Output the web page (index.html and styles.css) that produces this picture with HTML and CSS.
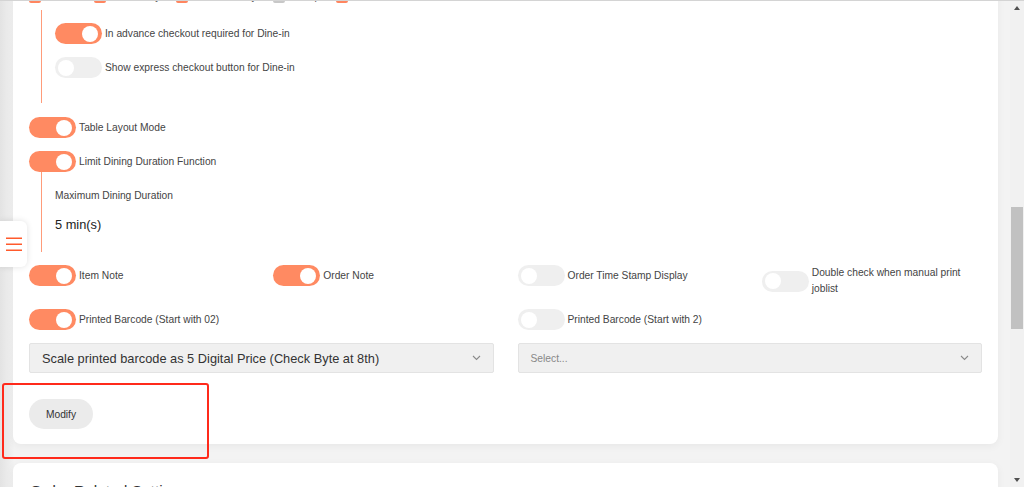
FILE: index.html
```html
<!DOCTYPE html>
<html lang="en">
<head>
  <meta charset="UTF-8">
  <title>Store Settings</title>
  <link rel="stylesheet" href="styles.css">
</head>
<body>
  <div class="viewport">
    <main class="page">

      <!-- Dine-in settings card (scrolled) -->
      <section class="card card-first">
        <div class="check-row">
          <label class="check on"><span class="box"></span>Dine-in</label>
          <label class="check on"><span class="box"></span>Take Away</label>
          <label class="check on"><span class="box"></span>Food Delivery</label>
          <label class="check"><span class="box"></span>Pickup</label>
          <label class="check on"><span class="box"></span>Kiosk</label>
        </div>

        <div class="sub-group">
          <div class="switch-row"><span class="switch on"></span><span>In advance checkout required for Dine-in</span></div>
          <div class="switch-row"><span class="switch"></span><span>Show express checkout button for Dine-in</span></div>
        </div>

        <div class="switch-row table-mode"><span class="switch on"></span><span>Table Layout Mode</span></div>
        <div class="switch-row limit-duration"><span class="switch on"></span><span>Limit Dining Duration Function</span></div>

        <div class="sub-group duration">
          <div class="field-label">Maximum Dining Duration</div>
          <div class="field-value">5 min(s)</div>
        </div>

        <div class="option-grid">
          <div class="switch-row"><span class="switch on"></span><span>Item Note</span></div>
          <div class="switch-row"><span class="switch on"></span><span>Order Note</span></div>
          <div class="switch-row"><span class="switch"></span><span>Order Time Stamp Display</span></div>
          <div class="switch-row"><span class="switch"></span><span>Double check when manual print joblist</span></div>
          <div class="switch-row"><span class="switch on"></span><span>Printed Barcode (Start with 02)</span></div>
          <div></div>
          <div class="switch-row"><span class="switch"></span><span>Printed Barcode (Start with 2)</span></div>
          <div></div>
        </div>

        <div class="select-row">
          <div class="select">
            <span>Scale printed barcode as 5 Digital Price (Check Byte at 8th)</span>
            <svg class="chevron" width="9" height="6" viewBox="0 0 9 6"><polyline points="1,1 4.5,4.5 8,1" fill="none" stroke="#8a8a8a" stroke-width="1.1"/></svg>
          </div>
          <div class="select placeholder">
            <span>Select...</span>
            <svg class="chevron" width="9" height="6" viewBox="0 0 9 6"><polyline points="1,1 4.5,4.5 8,1" fill="none" stroke="#8a8a8a" stroke-width="1.1"/></svg>
          </div>
        </div>

        <button class="btn-modify">Modify</button>
      </section>

      <section class="card card-next">
        <h2>Order Related Settings</h2>
      </section>

      <!-- floating side menu tab -->
      <button class="menu-tab" aria-label="Menu">
        <svg width="16" height="14" viewBox="0 0 16 14">
          <rect x="0" y="0.5" width="16" height="1.5" fill="#ff5a2c"/>
          <rect x="0" y="6.5" width="16" height="1.5" fill="#ff5a2c"/>
          <rect x="0" y="12.5" width="16" height="1.5" fill="#ff5a2c"/>
        </svg>
      </button>

      <!-- red highlight drawn over the screenshot -->
      <div class="annotation"></div>
    </main>

    <div class="scrollbar">
      <span class="arrow up"></span>
      <div class="track"><div class="thumb"></div></div>
      <span class="arrow down"></span>
    </div>
  </div>
</body>
</html>
```

FILE: styles.css
```css
/* Reset & base */
* { box-sizing: border-box; margin: 0; padding: 0; }
html, body { height: 100%; }
body { font-family: "Liberation Sans", Arial, sans-serif; font-size: 10.25px; color: #444; background: #f3f3f3; border-top: 1px solid #d4d4d4; overflow: hidden; }

.viewport { display: flex; height: 486px; }
.page { position: relative; flex: 1; padding: 0 12px 0 13px; overflow: hidden; background: linear-gradient(to right, #e3e3e3 0, #f1f1f1 13px, #f3f3f3 14px); }

/* Cards */
.card { background: #ffffff; box-shadow: 0 2px 8px rgba(0, 0, 0, 0.05); }
.card-first { border-radius: 0 0 8px 8px; padding: 0 16px 15px; }
.card-next { margin-top: 19px; border-radius: 8px 8px 0 0; padding: 18px 17px; }
.card-next h2 { font-size: 15.5px; font-weight: normal; color: #333; line-height: 20px; }

/* Checkbox row cut off at top */
.check-row { display: flex; gap: 16px; margin-top: -10px; height: 12px; line-height: 12px; }
.check { display: flex; align-items: center; gap: 5px; color: #555; }
.check .box { width: 12px; height: 12px; border: 2px solid #c8c8c8; border-radius: 2px; background: #fff; }
.check.on .box { border-color: #ff8660; }

/* Nested option group */
.sub-group { margin-top: 7px; margin-left: 12px; border-left: 1px solid #ff9c7a; padding: 13px 0 25px 13px; display: flex; flex-direction: column; gap: 13px; }
.sub-group.duration { margin-top: 0; padding: 17px 0 19px 13px; gap: 14px; }
.field-label { line-height: 13px; color: #444; }
.field-value { font-size: 12.8px; line-height: 17px; color: #222; }

/* Switches */
.switch-row { display: flex; align-items: center; gap: 3px; min-height: 21px; line-height: 16px; }
.switch { position: relative; flex: none; width: 47px; height: 21px; border-radius: 11px; background: #efefef; }
.switch::after { content: ""; position: absolute; top: 2.5px; left: 3px; width: 16px; height: 16px; border-radius: 50%; background: #ffffff; }
.switch.on { background: #ff8a62; }
.switch.on::after { left: auto; right: 4px; }
.table-mode { margin-top: 14px; }
.limit-duration { margin-top: 13px; }

/* Option grid */
.option-grid { margin-top: 13px; display: grid; grid-template-columns: repeat(4, 1fr); gap: 12px 24px; align-items: start; }

/* Selects */
.select-row { margin-top: 13px; display: grid; grid-template-columns: 1fr 1fr; gap: 24px; }
.select { height: 30px; display: flex; align-items: center; justify-content: space-between; padding: 0 12px; background: #f0f0f0; border: 1px solid #e3e3e3; border-radius: 2px; font-size: 12.8px; color: #333; }
.select.placeholder { font-size: 10.25px; color: #888; }

/* Button */
.btn-modify { margin-top: 26px; width: 64px; height: 30px; border: none; border-radius: 15px; background: #ebebeb; font-family: inherit; font-size: 10.25px; color: #333; }

/* Floating menu tab */
.menu-tab { position: absolute; left: 0; top: 220px; width: 27px; height: 46px; border: none; border-radius: 0 6px 6px 0; background: #ffffff; box-shadow: 0 0 6px rgba(0, 0, 0, 0.12); display: flex; align-items: center; justify-content: center; }

/* Red annotation rectangle */
.annotation { position: absolute; left: 2px; top: 382px; width: 207px; height: 76px; border: 2px solid #ff2a1b; border-radius: 3px; }

/* Fake scrollbar */
.scrollbar { width: 14px; background: #f1f1f1; display: flex; flex-direction: column; align-items: center; }
.scrollbar .arrow { width: 0; height: 0; border-left: 3.5px solid transparent; border-right: 3.5px solid transparent; }
.scrollbar .up { margin: 5px 0 4px; border-bottom: 4px solid #505050; }
.scrollbar .down { margin: 4px 0 5px; border-top: 4px solid #505050; }
.scrollbar .track { flex: 1; width: 100%; padding: 193px 1px 0 1px; }
.scrollbar .thumb { height: 122px; background: #c1c1c1; }
```
